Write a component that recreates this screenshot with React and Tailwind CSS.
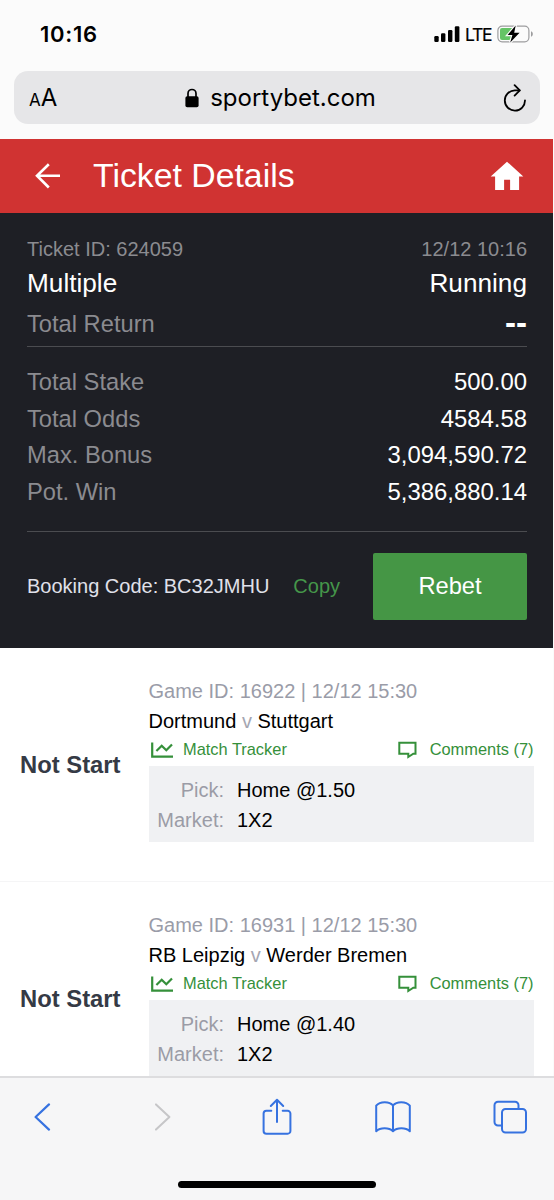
import React from 'react';

const summary = [
    { label: 'Total Stake', value: '500.00' },
    { label: 'Total Odds', value: '4584.58' },
    { label: 'Max. Bonus', value: '3,094,590.72' },
    { label: 'Pot. Win', value: '5,386,880.14' },
];

const games = [
    { id: '16922', time: '12/12 15:30', home: 'Dortmund', away: 'Stuttgart', pick: 'Home @1.50', market: '1X2', comments: 7 },
    { id: '16931', time: '12/12 15:30', home: 'RB Leipzig', away: 'Werder Bremen', pick: 'Home @1.40', market: '1X2', comments: 7 },
];

const StatusBar = () => (
    <div className="flex h-[71px] items-start justify-between pl-[40px] pr-[20px] pt-[20px] font-['Inter',sans-serif] text-black">
        <span className="text-[22px] font-semibold leading-[28px] tracking-[0.7px]">10:16</span>
        <div className="flex h-[28px] items-center">
            <svg width="26" height="16" viewBox="0 0 26 16" fill="#000">
                <rect x="0.3" y="10" width="4.4" height="6" rx="1.2" />
                <rect x="7" y="7.3" width="4.4" height="8.7" rx="1.2" />
                <rect x="14" y="4" width="4.4" height="12" rx="1.2" />
                <rect x="20.8" y="0.3" width="4.6" height="15.7" rx="1.2" />
            </svg>
            <span className="ml-[5px] w-[26px] whitespace-nowrap pt-[1px] text-[17.5px] leading-[28px] tracking-[-1.3px] [-webkit-text-stroke:0.2px_#000]">LTE</span>
            <svg className="ml-[6px]" width="37" height="18" viewBox="0 0 37 18" fill="none">
                <rect x="0.9" y="1.2" width="31" height="15.6" rx="4.2" stroke="#9d9d9f" strokeWidth="1.2" />
                <path d="M34 6.3c1.2.4 1.8 1.4 1.8 2.7s-.6 2.3-1.8 2.7Z" fill="#9d9d9f" />
                <path d="M5 3h10v12H5a2 2 0 0 1-2-2V5a2 2 0 0 1 2-2Z" fill="#65c466" />
                <path d="M18.7 0.6 10.6 10h4.8l-2.2 7.4L22.6 7.8h-5.4Z" fill="#000" stroke="#fbfbfb" strokeWidth="2.4" paintOrder="stroke" />
            </svg>
        </div>
    </div>
);

const AddressBar = () => (
    <div className="mx-[14px] flex h-[53px] items-center justify-between rounded-[14px] bg-[#e6e6e8] pl-[15px] pr-[13px] font-['Inter',sans-serif] text-black">
        <div className="flex w-[29px] items-baseline pt-[2px] leading-[53px]">
            <span className="text-[17px]">A</span>
            <span className="text-[24px]">A</span>
        </div>
        <div className="flex items-center">
            <svg width="14" height="20" viewBox="0 0 14 20" fill="none">
                <path d="M3 9V5.5a4 4 0 0 1 8 0V9" stroke="#000" strokeWidth="1.7" />
                <rect x="0.4" y="8.3" width="13.2" height="11" rx="1.8" fill="#000" />
            </svg>
            <span className="ml-[11px] text-[24px] leading-[53px]">sportybet.com</span>
        </div>
        <svg width="24" height="28" viewBox="0 0 24 28" fill="none" stroke="#000" strokeWidth="1.8" strokeLinecap="round" strokeLinejoin="round">
            <path d="M16.5 6.4h-4.7A10.1 10.1 0 1 0 22 16.3" />
            <path d="m11.6 1.2 5.2 5.2-5.2 5.2" />
        </svg>
    </div>
);

const Header = () => (
    <header className="mt-[15px] flex h-[74px] shrink-0 items-center bg-[#d03332] pl-[35px] pr-[29px] text-white">
        <svg width="26" height="26" viewBox="0 0 26 26" fill="none" stroke="#fff" strokeWidth="2.6">
            <path d="M13.8 1.2 2 12.7l11.8 11.8M2 12.7h23" />
        </svg>
        <h1 className="ml-[32px] pb-[2px] text-[33.8px] leading-[72px]">Ticket Details</h1>
        <svg className="ml-auto" width="34" height="30" viewBox="0 0 34 30" fill="#fff">
            <path d="M17 0.7 0.7 15.5h4.4V29h9V18.8h6V29h9V15.5h4.2Z" />
        </svg>
    </header>
);

const TicketSummary = () => (
    <section className="h-[435px] shrink-0 bg-[#1e1f25] pl-[27px] pr-[26px] pt-[22px] text-[#8b8b90]">
        <div className="flex justify-between text-[20px] leading-[28px]">
            <span>Ticket ID: 624059</span>
            <span>12/12 10:16</span>
        </div>
        <div className="flex justify-between text-[26.2px] leading-[40px] text-white">
            <span>Multiple</span>
            <span>Running</span>
        </div>
        <div className="flex h-[44px] justify-between border-b border-[#4b4c50] text-[23.7px] leading-[42px]">
            <span>Total Return</span>
            <span className="text-[33px] font-bold leading-[39px] text-white">--</span>
        </div>
        <div className="h-[185px] border-b border-[#4b4c50] pt-[17.4px]">
            {summary.map((row) => (
                <div key={row.label} className="flex justify-between text-[23.7px] leading-[36.4px]">
                    <span>{row.label}</span>
                    <span className="text-[23.9px] text-white">{row.value}</span>
                </div>
            ))}
        </div>
        <div className="mt-[20.5px] flex items-center">
            <span className="text-[20px] text-[#e0e1ea]">Booking Code: BC32JMHU</span>
            <button className="ml-[24px] text-[20px] text-[#45964a]">Copy</button>
            <button className="ml-auto h-[67px] w-[154px] rounded-[2px] bg-[#459645] pt-[2px] text-[23.7px] text-white">Rebet</button>
        </div>
    </section>
);

const GameCard = ({ game }) => (
    <article className="flex h-[234px] shrink-0 border-b border-[#f5f5f6] bg-white pr-[19.5px]">
        <div className="flex w-[148.5px] items-center pl-[20px] text-[23.8px] font-bold text-[#353a45]">Not Start</div>
        <div className="flex-1 pt-[28px]">
            <p className="text-[20px] leading-[30px] text-[#9a9ca8]">Game ID: {game.id} | {game.time}</p>
            <p className="text-[20px] leading-[30px] text-black">
                {game.home} <span className="text-[#a5a6b2]">v</span> {game.away}
            </p>
            <div className="flex h-[29.7px] justify-between text-[16.4px] leading-[26px] text-[#35903a]">
                <span className="flex">
                    <svg className="ml-[2px] mt-[6px]" width="22" height="17" viewBox="0 0 22 17" fill="none" stroke="#35903a" strokeWidth="2.2">
                        <path d="M1.2 0.5v14.2H22" />
                        <path d="m5.4 9 5.3-5.3 4.6 4.6 5.7-5.9" />
                    </svg>
                    <span className="ml-[10.5px]">Match Tracker</span>
                </span>
                <span className="flex">
                    <svg className="mt-[5px]" width="19" height="18" viewBox="0 0 19 18" fill="none" stroke="#35903a" strokeWidth="2">
                        <path d="M1.3 1.7h16.2v11h-2.2l-5 3.3v-3.3h-9Z" />
                    </svg>
                    <span className="ml-[13px]">Comments ({game.comments})</span>
                </span>
            </div>
            <div className="h-[76.7px] bg-[#f0f1f3] pt-[9px] text-[20px] leading-[30px]">
                <div className="flex">
                    <span className="w-[75.5px] text-right text-[#9b9ca6]">Pick:</span>
                    <span className="ml-[13px] text-black">{game.pick}</span>
                </div>
                <div className="flex">
                    <span className="w-[75.5px] text-right text-[#9b9ca6]">Market:</span>
                    <span className="ml-[13px] text-black">{game.market}</span>
                </div>
            </div>
        </div>
    </article>
);

const BrowserToolbar = () => (
    <footer className="h-[124px] shrink-0 border-t-2 border-[#dddddf] bg-[#f6f6f7]">
        <div className="grid h-[78px] grid-cols-[85px_154px_76px_156px_77px] place-items-center text-[#3672e0]">
            <svg width="17" height="28" viewBox="0 0 17 28" fill="none" stroke="currentColor" strokeWidth="2.2" strokeLinecap="round" strokeLinejoin="round">
                <path d="M15 1.4 1.6 14 15 26.6" />
            </svg>
            <svg width="17" height="28" viewBox="0 0 17 28" fill="none" stroke="#c6c6c8" strokeWidth="2" strokeLinecap="round" strokeLinejoin="round">
                <path d="M2 1.4 15.4 14 2 26.6" />
            </svg>
            <svg width="30" height="38" viewBox="0 0 30 38" fill="none" stroke="currentColor" strokeWidth="2" strokeLinecap="round" strokeLinejoin="round">
                <path d="M9.3 12.8H4.4a2.8 2.8 0 0 0-2.8 2.8v17.3a2.8 2.8 0 0 0 2.8 2.8h21.2a2.8 2.8 0 0 0 2.8-2.8V15.6a2.8 2.8 0 0 0-2.8-2.8h-4.9" />
                <path d="M15 24V1.8M8.8 8 15 1.8 21.2 8" />
            </svg>
            <svg width="36" height="32" viewBox="0 0 36 32" fill="none" stroke="currentColor" strokeWidth="2" strokeLinejoin="round">
                <path d="M18 4.5C14.5 0 5 0 1.2 4.6V30.3c4-4 12.8-4 16.8 0 4-4 12.8-4 16.8 0V4.6C31 0 21.5 0 18 4.5ZM18 4.5v25.8" />
            </svg>
            <svg width="34" height="34" viewBox="0 0 34 34" fill="none" stroke="currentColor" strokeWidth="2" strokeLinejoin="round">
                <path d="M8.5 25.6H5a3.500 3.500 0 0 1-3.500-3.500V5.300A3.500 3.500 0 0 1 5 1.800h17a3.500 3.500 0 0 1 3.500 3.500v3.300" />
                <rect x="9" y="9" width="24" height="23.5" rx="3.5" />
            </svg>
        </div>
        <div className="ml-[178.3px] mt-[24.7px] h-[7.5px] w-[198px] rounded-full bg-black" />
    </footer>
);

const App = () => {
    return (
        <div className="flex h-[1200px] w-[554px] flex-col overflow-hidden bg-[#fbfbfb] font-['Liberation_Sans',Arial,sans-serif]">
            <StatusBar />
            <AddressBar />
            <main className="flex min-h-0 w-[553px] flex-1 flex-col overflow-hidden">
                <Header />
                <TicketSummary />
                {games.map((game) => (
                    <GameCard key={game.id} game={game} />
                ))}
            </main>
            <BrowserToolbar />
        </div>
    );
};

export default App;
